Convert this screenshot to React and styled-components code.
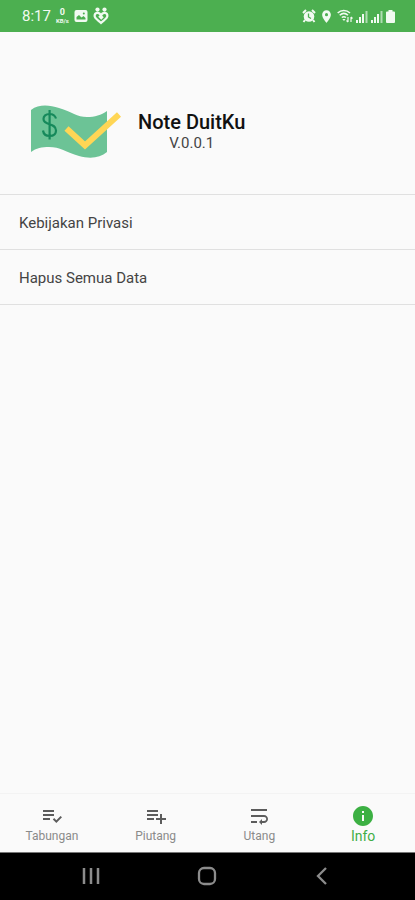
import React, { useState } from "react";
import styled, { createGlobalStyle } from "styled-components";
import {
  MdPlaylistAddCheck,
  MdPlaylistAdd,
  MdWrapText,
  MdInfo,
  MdLocationOn,
} from "react-icons/md";

const GlobalStyle = createGlobalStyle`
  * {
    box-sizing: border-box;
  }
  body {
    margin: 0;
    background: #fafafa;
    font-family: Roboto, "Liberation Sans", sans-serif;
  }
`;

const Screen = styled.div`
  display: flex;
  flex-direction: column;
  min-height: 100vh;
  background: #fafafa;
`;

const StatusBar = styled.header`
  display: flex;
  align-items: center;
  justify-content: space-between;
  height: 32px;
  padding: 0 20px 0 22px;
  background: #4caf50;
  color: #f1faf1;
`;

const StatusGroup = styled.div`
  display: flex;
  align-items: center;
  gap: ${(props) => props.$gap}px;

  svg {
    display: block;
  }
`;

const Clock = styled.span`
  font-size: 15px;
  line-height: 20px;
`;

const Speed = styled.span`
  display: flex;
  flex-direction: column;
  align-items: center;
  font-size: 9px;
  font-weight: 700;
  line-height: 9px;
`;

const SpeedUnit = styled.small`
  font-size: 6px;
  line-height: 7px;
`;

const Main = styled.main`
  flex: 1;
`;

const About = styled.section`
  display: flex;
  align-items: center;
  gap: 16px;
  height: 162px;
  padding: 38px 30px 0;
`;

const AppTitle = styled.div`
  display: flex;
  flex-direction: column;
  align-items: center;
`;

const AppName = styled.h1`
  margin: 0;
  font-size: 20px;
  font-weight: 500;
  line-height: 22px;
  color: #111;
`;

const Version = styled.p`
  margin: 0;
  font-size: 15px;
  line-height: 20px;
  color: #444;
`;

const Menu = styled.ul`
  margin: 0;
  padding: 0;
  list-style: none;
  border-top: 1px solid #e0e0e0;
`;

const MenuItem = styled.li`
  border-bottom: 1px solid #e0e0e0;
`;

const MenuButton = styled.button`
  display: block;
  width: 100%;
  height: 54px;
  padding: 1px 19px 0;
  border: 0;
  background: transparent;
  font-family: inherit;
  font-size: 15px;
  text-align: left;
  color: #444;
  cursor: pointer;
`;

const BottomNav = styled.nav`
  display: flex;
  height: 59px;
  border-top: 1px solid #f3f3f3;
  background: #fafafa;
`;

const NavButton = styled.button`
  flex: 1;
  display: flex;
  flex-direction: column;
  align-items: center;
  padding: 10px 0 0;
  border: 0;
  background: transparent;
  font-family: inherit;
  font-size: ${(props) => (props.$active ? 14 : 12)}px;
  line-height: 17px;
  color: ${(props) => (props.$active ? "#3fae46" : "#8a8a8a")};
  cursor: pointer;

  svg {
    display: block;
    width: 24px;
    height: 24px;
    color: ${(props) => (props.$active ? "#3cb043" : "#5c5c5c")};
  }
`;

const SystemNav = styled.footer`
  display: flex;
  align-items: center;
  justify-content: space-between;
  height: 48px;
  padding: 0 82px 2px 80px;
  border-top: 1px solid #777;
  background: #000;
`;

const SystemButton = styled.button`
  padding: 0;
  border: 0;
  background: transparent;
  color: #8c8c8c;
  cursor: pointer;

  svg {
    display: block;
  }
`;

const Logo = () => (
  <svg width="92" height="54" viewBox="0 0 92 54" role="img" aria-label="Note DuitKu">
    <path
      d="M1 5C9-1 19 0 29 3C42 7 47 12 57 12C65 12 71 10 77 6V47C70 53 60 54 49 51C36 47 30 42 19 42C12 42 6 43 1 47Z"
      fill="#6cc396"
    />
    <path
      d="M26 13.500C25 10.500 22.800 9 19.500 9C15.800 9 13.500 11 13.500 14C13.500 21 26 17.500 26 25.500C26 29 23.500 31 19.800 31C16 31 13.500 29 13 25.500M19.600 5V34.500"
      fill="none"
      stroke="#16895b"
      strokeWidth="2.200"
    />
    <path d="M36.500 23.500L55 40.500L89 9.500" fill="none" stroke="#ffd655" strokeWidth="6" />
  </svg>
);

const PictureIcon = () => (
  <svg width="14" height="14" viewBox="0 0 14 14">
    <rect x="0.500" y="1" width="13" height="12" rx="2" fill="currentColor" />
    <path d="M2.500 10.500V8L5 6L7.500 8.500L9.500 7L11.500 9V10.500Z" fill="#4caf50" />
    <circle cx="9.800" cy="4.500" r="1" fill="#4caf50" />
  </svg>
);

const HeartsIcon = () => (
  <svg width="16" height="18" viewBox="0 0 16 18" fill="none" stroke="currentColor" strokeWidth="2.200">
    <circle cx="4.500" cy="2.600" r="2.100" fill="currentColor" stroke="none" />
    <circle cx="11.500" cy="2.600" r="2.100" fill="currentColor" stroke="none" />
    <path d="M7.500 12L10 9.500M8 8.500C6 4.500 1.600 5.500 1.600 9C1.600 11 3.500 12 8 16C12.500 12 14.400 11 14.400 9C14.400 5.500 10 4.500 8 8.500L6 10.500" />
  </svg>
);

const AlarmIcon = () => (
  <svg width="14" height="14" viewBox="0 0 14 14">
    <circle cx="7" cy="7.500" r="5.300" fill="currentColor" />
    <path d="M1 4L4 1M13 4L10 1M3 11L1.500 13M11 11L12.500 13" stroke="currentColor" strokeWidth="2" />
    <path d="M6.500 4.500V8L9 9.500" fill="none" stroke="#4caf50" strokeWidth="1.300" />
  </svg>
);

const WifiIcon = () => (
  <svg width="16" height="14" viewBox="0 0 16 14" fill="none" stroke="currentColor" strokeWidth="1.500">
    <path d="M0.700 4C4 0.500 9.500 0.500 13 4M2.700 6.300C5.200 4 8.500 4 11 6.300M4.800 8.500C6 7.500 7.700 7.500 9 8.500" />
    <path d="M5.300 10L7 12L8.500 10Z" fill="currentColor" stroke="none" />
    <path d="M11 8V13M9.500 11.500L11 13M14 13V8M15.500 9.500L14 8" strokeWidth="1.200" />
  </svg>
);

const SignalIcon = () => (
  <svg width="12" height="13" viewBox="0 0 12 13" fill="currentColor">
    <path d="M0 10H2V13H0ZM3 7H5V13H3ZM6 4H8V13H6Z" />
    <path d="M9.500 1H11.500V13H9.500Z" opacity="0.600" />
  </svg>
);

const BatteryIcon = () => (
  <svg width="9" height="13" viewBox="0 0 9 13" fill="currentColor">
    <path d="M2.500 0H6.500V1.500H8Q9 1.500 9 2.500V12Q9 13 8 13H1Q0 13 0 12V2.500Q0 1.500 1 1.500H2.500Z" />
  </svg>
);

const menuItems = ["Kebijakan Privasi", "Hapus Semua Data"];

const tabs = [
  { name: "Tabungan", Icon: MdPlaylistAddCheck },
  { name: "Piutang", Icon: MdPlaylistAdd },
  { name: "Utang", Icon: MdWrapText },
  { name: "Info", Icon: MdInfo },
];

const App = () => {
  const [active, setActive] = useState("Info");

  return (
    <Screen>
      <GlobalStyle />
      <StatusBar>
        <StatusGroup $gap={5}>
          <Clock>8:17</Clock>
          <Speed>
            0<SpeedUnit>KB/s</SpeedUnit>
          </Speed>
          <PictureIcon />
          <HeartsIcon />
        </StatusGroup>
        <StatusGroup $gap={3}>
          <AlarmIcon />
          <MdLocationOn size={15} />
          <WifiIcon />
          <SignalIcon />
          <SignalIcon />
          <BatteryIcon />
        </StatusGroup>
      </StatusBar>

      <Main>
        <About>
          <Logo />
          <AppTitle>
            <AppName>Note DuitKu</AppName>
            <Version>V.0.0.1</Version>
          </AppTitle>
        </About>
        <Menu>
          {menuItems.map((item) => (
            <MenuItem key={item}>
              <MenuButton type="button">{item}</MenuButton>
            </MenuItem>
          ))}
        </Menu>
      </Main>

      <BottomNav>
        {tabs.map(({ name, Icon }) => (
          <NavButton
            key={name}
            type="button"
            $active={active === name}
            onClick={() => setActive(name)}
          >
            <Icon />
            {name}
          </NavButton>
        ))}
      </BottomNav>

      <SystemNav>
        <SystemButton type="button" aria-label="Recent apps">
          <svg width="22" height="20" viewBox="0 0 22 20" stroke="currentColor" strokeWidth="2.500">
            <path d="M4 2V18M11 2V18M18 2V18" />
          </svg>
        </SystemButton>
        <SystemButton type="button" aria-label="Home">
          <svg width="20" height="20" viewBox="0 0 20 20" fill="none" stroke="currentColor" strokeWidth="2.300">
            <rect x="2" y="2" width="16" height="16" rx="5" />
          </svg>
        </SystemButton>
        <SystemButton type="button" aria-label="Back">
          <svg width="22" height="20" viewBox="0 0 22 20" fill="none" stroke="currentColor" strokeWidth="2.300">
            <path d="M15 2L7 10L15 18" />
          </svg>
        </SystemButton>
      </SystemNav>
    </Screen>
  );
};

export default App;
